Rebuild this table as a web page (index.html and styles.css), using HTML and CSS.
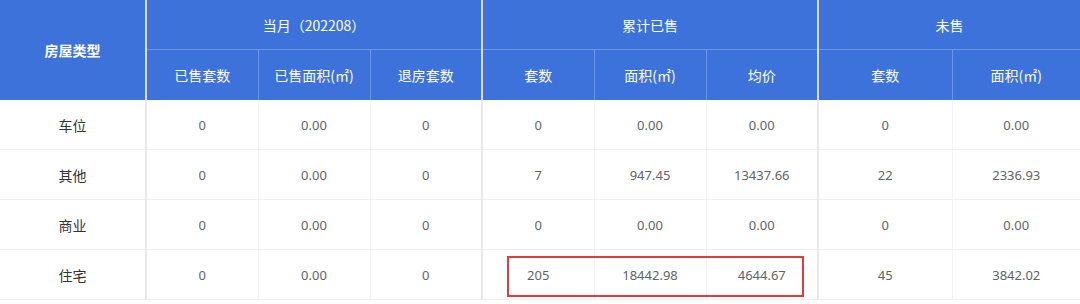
FILE: index.html
```html
<!DOCTYPE html>
<html lang="zh">
<head>
<meta charset="utf-8">
<link rel="stylesheet" href="styles.css">
</head>
<body>
<div class="wrap">
<table class="grid">
  <colgroup>
    <col class="c-type">
    <col class="c-m"><col class="c-m"><col class="c-m">
    <col class="c-m"><col class="c-m"><col class="c-m">
    <col class="c-u1"><col class="c-u2">
  </colgroup>
  <thead>
    <tr class="h1">
      <th rowspan="2" class="type-h">房屋类型</th>
      <th colspan="3" class="grp">当月（202208）</th>
      <th colspan="3" class="grp">累计已售</th>
      <th colspan="2" class="grp">未售</th>
    </tr>
    <tr class="h2">
      <th class="gs">已售套数</th><th>已售面积(㎡)</th><th>退房套数</th>
      <th class="gs">套数</th><th>面积(㎡)</th><th>均价</th>
      <th class="gs">套数</th><th>面积(㎡)</th>
    </tr>
  </thead>
  <tbody>
    <tr>
      <td class="label">车位</td>
      <td class="gs">0</td><td>0.00</td><td>0</td>
      <td class="gs">0</td><td>0.00</td><td>0.00</td>
      <td class="gs">0</td><td>0.00</td>
    </tr>
    <tr>
      <td class="label">其他</td>
      <td class="gs">0</td><td>0.00</td><td>0</td>
      <td class="gs">7</td><td>947.45</td><td>13437.66</td>
      <td class="gs">22</td><td>2336.93</td>
    </tr>
    <tr>
      <td class="label">商业</td>
      <td class="gs">0</td><td>0.00</td><td>0</td>
      <td class="gs">0</td><td>0.00</td><td>0.00</td>
      <td class="gs">0</td><td>0.00</td>
    </tr>
    <tr>
      <td class="label">住宅</td>
      <td class="gs">0</td><td>0.00</td><td>0</td>
      <td class="gs">205</td><td>18442.98</td><td>4644.67</td>
      <td class="gs">45</td><td>3842.02</td>
    </tr>
  </tbody>
</table>
<div class="highlight"></div>
</div>
</body>
</html>
```

FILE: styles.css
```css
html, body {
  margin: 0;
  padding: 0;
  background: #ffffff;
}
body {
  font-family: "Noto Sans", "Noto Sans CJK SC", sans-serif;
  width: 1080px;
  height: 304px;
  overflow: hidden;
}
.wrap {
  position: relative;
  width: 1080px;
}
.grid {
  width: 1080px;
  border-collapse: collapse;
  table-layout: fixed;
}
.c-type { width: 146px; }
.c-m { width: 112px; }
.c-u1 { width: 134px; }
.c-u2 { width: 128px; }

th {
  background: #3d72da;
  color: #ffffff;
  font-weight: normal;
  font-size: 14px;
  height: 49px;
  padding: 0;
  text-align: center;
  border-left: 1px solid #6a96e6;
  border-bottom: 1px solid #6a96e6;
  font-family: "Noto Sans CJK SC", "Noto Sans", sans-serif;
}
.h2 th { height: 50px; border-bottom: none; }
th.type-h {
  font-weight: bold;
  border-left: none;
  border-bottom: none;
}
th.grp, th.gs {
  border-left: 2px solid #d4def3;
}
td {
  height: 49px;
  padding: 0;
  text-align: center;
  font-size: 13px;
  color: #5f6368;
  border-left: 1px solid #f2f3f5;
  border-bottom: 1px solid #eff0f2;
}
td.label {
  border-left: none;
  font-size: 14px;
  color: #333333;
  font-family: "Noto Sans CJK SC", "Noto Sans", sans-serif;
}
td.gs {
  border-left: 2px solid #e6e8ed;
}
.highlight {
  position: absolute;
  left: 507px;
  top: 256px;
  width: 293px;
  height: 37px;
  border: 2px solid #e5393b;
}
```
